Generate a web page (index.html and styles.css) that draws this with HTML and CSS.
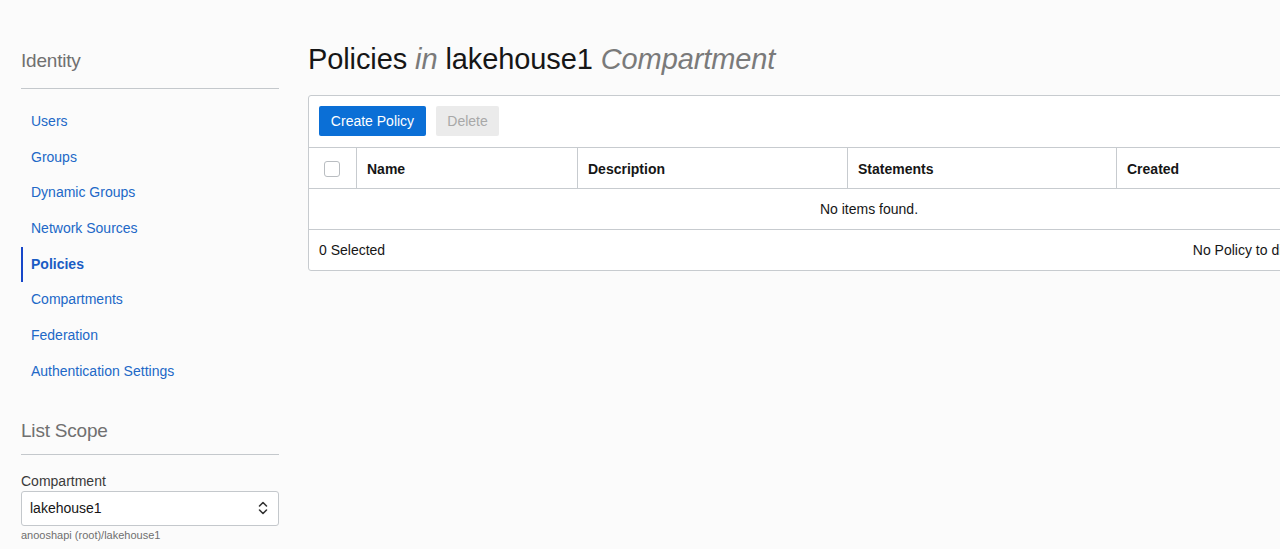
FILE: index.html
```html
<!DOCTYPE html>
<html lang="en">
<head>
<meta charset="utf-8">
<title>Policies</title>
<link rel="stylesheet" href="styles.css">
</head>
<body>
<div class="page">
  <aside class="sidebar">
    <h2 class="side-title">Identity</h2>
    <ul class="nav">
      <li><a href="#">Users</a></li>
      <li><a href="#">Groups</a></li>
      <li><a href="#">Dynamic Groups</a></li>
      <li><a href="#">Network Sources</a></li>
      <li class="active"><a href="#">Policies</a></li>
      <li><a href="#">Compartments</a></li>
      <li><a href="#">Federation</a></li>
      <li><a href="#">Authentication Settings</a></li>
    </ul>
    <h2 class="side-title scope-title">List Scope</h2>
    <div class="field">
      <label class="field-label">Compartment</label>
      <div class="select">
        <span>lakehouse1</span>
        <svg class="select-arrows" width="10" height="16" viewBox="0 0 10 16"><path d="M1.5 6 L5 2.5 L8.5 6" fill="none" stroke="#333" stroke-width="1.6" stroke-linecap="round" stroke-linejoin="round"/><path d="M1.5 10 L5 13.5 L8.5 10" fill="none" stroke="#333" stroke-width="1.6" stroke-linecap="round" stroke-linejoin="round"/></svg>
      </div>
      <div class="field-hint">anooshapi (root)/lakehouse1</div>
    </div>
  </aside>
  <main class="main">
    <h1 class="title">Policies <em>in</em> lakehouse1 <em>Compartment</em></h1>
    <div class="table-box">
      <div class="toolbar">
        <button class="btn btn-primary">Create Policy</button>
        <button class="btn btn-disabled">Delete</button>
      </div>
      <div class="thead">
        <div class="th th-check"><span class="checkbox"></span></div>
        <div class="th">Name</div>
        <div class="th">Description</div>
        <div class="th">Statements</div>
        <div class="th">Created</div>
      </div>
      <div class="empty">No items found.</div>
      <div class="tfoot">
        <span>0 Selected</span>
        <span class="tfoot-right">No Policy to display</span>
      </div>
    </div>
  </main>
</div>
</body>
</html>
```

FILE: styles.css
```css
html, body {
  margin: 0;
  padding: 0;
}
body {
  background: #fbfbfb;
  font-family: "Liberation Sans", Arial, Helvetica, sans-serif;
  color: #161616;
  overflow: hidden;
  height: 549px;
}
.page {
  display: flex;
  align-items: flex-start;
}
.sidebar {
  width: 258px;
  margin-left: 21px;
  flex: none;
}
.side-title {
  margin: 0;
  padding-top: 49px;
  font-size: 19px;
  font-weight: normal;
  color: #707070;
  line-height: 24px;
  padding-bottom: 15px;
  border-bottom: 1px solid #c4c8cc;
  letter-spacing: -0.2px;
}
.nav {
  list-style: none;
  margin: 15px 0 0;
  padding: 0;
}
.nav li {
  height: 35.7px;
  line-height: 35.7px;
  font-size: 14px;
  padding-left: 8px;
  border-left: 2px solid transparent;
}
.nav a {
  color: #2168c7;
  text-decoration: none;
}
.nav li.active {
  border-left-color: #1747c9;
}
.nav li.active a {
  font-weight: bold;
  color: #1a5cc4;
}
.scope-title {
  padding-top: 29px;
  padding-bottom: 11px;
}
.field {
  margin-top: 17px;
}
.field-label {
  display: block;
  font-size: 14px;
  color: #3a3a3a;
  line-height: 18px;
  font-weight: 500;
}
.select {
  margin-top: 1px;
  height: 33px;
  border: 1px solid #c4c8cc;
  border-radius: 3px;
  background: #fff;
  display: flex;
  align-items: center;
  justify-content: space-between;
  padding: 0 10px 0 8px;
  font-size: 14px;
  color: #161616;
}
.select-arrows {
  display: block;
}
.field-hint {
  font-size: 11px;
  color: #6f6f6f;
  line-height: 16px;
  margin-top: 1px;
}
.main {
  margin-left: 29px;
  flex: none;
}
.title {
  margin: 0;
  padding-top: 42px;
  font-size: 29px;
  font-weight: normal;
  line-height: 34px;
  color: #161616;
  letter-spacing: -0.1px;
  white-space: nowrap;
}
.title em {
  color: #7a7a7a;
}
.table-box {
  margin-top: 19px;
  width: 1120px;
  background: #fff;
  border: 1px solid #c7cbcf;
  border-radius: 3px;
}
.toolbar {
  display: flex;
  gap: 10px;
  padding: 10px 10px 10px 10px;
  height: 31px;
}
.btn {
  height: 30px;
  border: none;
  border-radius: 2px;
  font-family: inherit;
  font-size: 14px;
  padding: 0 10px;
}
.btn-primary {
  background: #0b6fd6;
  color: #fff;
  width: 107px;
}
.btn-disabled {
  background: #ebebeb;
  color: #a8a8a8;
  width: 63px;
}
.thead {
  display: grid;
  grid-template-columns: 47px 221px 270px 269px 1fr;
  border-top: 1px solid #c7cbcf;
  border-bottom: 1px solid #c7cbcf;
  height: 40px;
}
.th {
  display: flex;
  align-items: center;
  padding-left: 10px;
  padding-top: 1px;
  font-size: 14px;
  font-weight: bold;
  color: #161616;
  border-left: 1px solid #c7cbcf;
}
.th-check {
  border-left: none;
  padding-left: 15px;
}
.checkbox {
  width: 14px;
  height: 14px;
  border: 1px solid #b9bdc1;
  border-radius: 3px;
  background: #fff;
}
.empty {
  height: 40px;
  line-height: 40px;
  text-align: center;
  font-size: 14px;
  border-bottom: 1px solid #c7cbcf;
}
.tfoot {
  height: 40px;
  display: flex;
  align-items: center;
  justify-content: space-between;
  padding: 0 10px;
  font-size: 14px;
}
.tfoot-right {
  margin-right: 104px;
}
```
